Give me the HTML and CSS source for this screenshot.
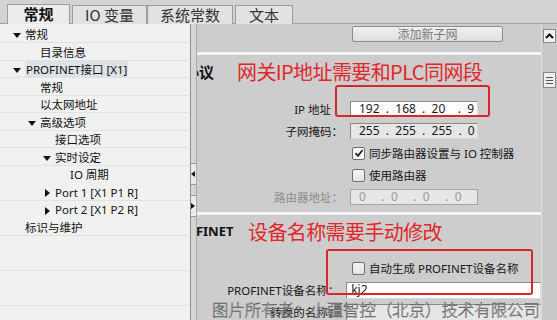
FILE: index.html
```html
<!DOCTYPE html>
<html lang="zh-CN">
<head>
    <meta charset="UTF-8">
    <title>PROFINET 接口属性</title>
    <link rel="stylesheet" href="styles.css">
</head>
<body>
    <div class="window">
        <div class="tabs">
            <div class="tab active">常规</div>
            <div class="tab t-io">IO 变量</div>
            <div class="tab t-const">系统常数</div>
            <div class="tab t-text">文本</div>
            <div class="tab-rest"></div>
        </div>

        <div class="main">
            <!-- 导航树 -->
            <ul class="tree">
                <li class="node l0"><span class="caret down"></span>常规</li>
                <li class="node l1">目录信息</li>
                <li class="node l0"><span class="caret down"></span><span class="sel">PROFINET接口 [X1]</span></li>
                <li class="node l1">常规</li>
                <li class="node l1">以太网地址</li>
                <li class="node l1"><span class="caret down"></span>高级选项</li>
                <li class="node l2">接口选项</li>
                <li class="node l2"><span class="caret down"></span>实时设定</li>
                <li class="node l3">IO 周期</li>
                <li class="node l2"><span class="caret right"></span>Port 1 [X1 P1 R]</li>
                <li class="node l2"><span class="caret right"></span>Port 2 [X1 P2 R]</li>
                <li class="node l0">标识与维护</li>
            </ul>

            <div class="splitter">
                <span class="split-btn"><span class="caret left"></span></span>
                <span class="split-btn"><span class="caret right"></span></span>
            </div>

            <!-- 属性区 -->
            <div class="content">
                <div class="toolbar">
                    <span class="btn">添加新子网</span>
                </div>

                <section class="section">
                    <div class="section-head">
                        <span class="section-title title-proto">协议</span>
                        <span class="note">网关IP地址需要和PLC同网段</span>
                    </div>
                    <div class="form form-ip">
                        <div class="row">
                            <span class="lbl lbl-nocolon">IP 地址</span>
                            <span class="field">192&nbsp; .&nbsp; 168&nbsp; .&nbsp; 20&nbsp;&nbsp;&nbsp; .&nbsp; 9</span>
                        </div>
                        <div class="row">
                            <span class="lbl">子网掩码：</span>
                            <span class="field grey">255&nbsp; .&nbsp; 255&nbsp; .&nbsp; 255&nbsp; .&nbsp; 0</span>
                        </div>
                        <div class="row check-row">
                            <span class="check on">
                                <svg width="10" height="10" viewBox="0 0 10 10"><path d="M1.5 5.2 L4 7.8 L8.6 2" fill="none" stroke="#222" stroke-width="1.8"/></svg>
                            </span>
                            同步路由器设置与 IO 控制器
                        </div>
                        <div class="row check-row">
                            <span class="check"></span>
                            使用路由器
                        </div>
                        <div class="row">
                            <span class="lbl disabled">路由器地址：</span>
                            <span class="field grey disabled">0&nbsp;&nbsp;&nbsp;&nbsp; .&nbsp; 0&nbsp;&nbsp;&nbsp;&nbsp; .&nbsp; 0&nbsp;&nbsp;&nbsp;&nbsp; .&nbsp; 0</span>
                        </div>
                    </div>
                </section>

                <section class="section">
                    <div class="section-head">
                        <span class="section-title title-pn">PROFINET</span>
                        <span class="note">设备名称需要手动修改</span>
                    </div>
                    <div class="form form-name">
                        <div class="row check-row">
                            <span class="check"></span>
                            自动生成 PROFINET设备名称
                        </div>
                        <div class="row">
                            <span class="lbl">PROFINET设备名称：</span>
                            <span class="field wide">kj2</span>
                        </div>
                        <div class="row">
                            <span class="lbl">转换的名称：</span>
                            <span class="field wide grey"></span>
                        </div>
                    </div>
                </section>
            </div>

            <div class="vscroll">
                <span class="sb-up">
                    <svg width="9" height="6" viewBox="0 0 9 6"><path d="M1 5 L4.5 1.5 L8 5" fill="none" stroke="#111" stroke-width="2"/></svg>
                </span>
                <span class="sb-thumb"><i></i><i></i><i></i></span>
            </div>
        </div>

        <!-- 标注 -->
        <div class="mark mark-ip"></div>
        <div class="mark mark-name"></div>
        <div class="watermark">图片所有者：小疆智控（北京）技术有限公司</div>
    </div>
</body>
</html>
```

FILE: styles.css
```css
* {
    margin: 0;
    padding: 0;
    box-sizing: border-box;
}

body {
    font-family: "Noto Sans", "Noto Sans CJK SC", sans-serif;
    font-size: 11.5px;
    color: #161616;
    background: #cdcdcd;
}

.window {
    position: relative;
    width: 557px;
    height: 320px;
    overflow: hidden;
}

/* 选项卡 */
.tabs {
    display: flex;
    align-items: flex-end;
    height: 24px;
    padding-left: 7px;
    background: #d3d3d3;
    border-bottom: 1px solid #a3a3a3;
}

.tab {
    height: 19px;
    margin-bottom: -1px;
    border: 1px solid #9d9d9d;
    border-bottom: none;
    background: #e2e2e2;
    font-family: "Noto Sans CJK SC", sans-serif;
    font-size: 15px;
    line-height: 17px;
    text-align: center;
    color: #333;
}

.tab.active {
    width: 63px;
    height: 20px;
    background: #ececec;
    font-weight: bold;
    color: #111;
}

.t-io {
    width: 75px;
    margin-left: 2px;
}

.t-const {
    width: 86px;
}

.t-text {
    width: 58px;
    margin-left: 2px;
}

.tab-rest {
    flex: 1;
}

.main {
    display: flex;
    height: 296px;
}

/* 导航树 */
.tree {
    list-style: none;
    width: 190px;
    padding-top: 2px;
    background-color: #f1f1f1;
    background-image: repeating-linear-gradient(to bottom, transparent 0, transparent 16.5px, #e2e2e2 16.5px, #e2e2e2 17.5px);
    background-position: 0 2px;
}

.node {
    height: 17.5px;
    line-height: 17.5px;
    white-space: nowrap;
    font-size: 11.5px;
    color: #111;
}

.l0 { padding-left: 25px; }
.l1 { padding-left: 40px; }
.l2 { padding-left: 55px; }
.l3 { padding-left: 70px; }

.sel {
    background: #dde1e8;
    padding: 1px 1px;
}

.caret {
    display: inline-block;
    width: 12px;
    margin-left: -12px;
    vertical-align: middle;
    line-height: 0;
}

.caret::before {
    content: "";
    display: inline-block;
    border-style: solid;
    border-color: transparent;
}

.caret.down::before {
    border-width: 5px 4px 0 4px;
    border-top-color: #111;
}

.caret.right::before {
    margin-left: 2px;
    border-width: 4px 0 4px 5px;
    border-left-color: #111;
}

.caret.left::before {
    border-width: 3px 4px 3px 0;
    border-right-color: #111;
}

/* 分隔条 */
.splitter {
    width: 7px;
    display: flex;
    flex-direction: column;
    padding-top: 139px;
    gap: 10px;
    background: #d5d5d5;
    border-left: 1px solid #8f8f8f;
    border-right: 1px solid #a9a9a9;
}

.split-btn {
    height: 22px;
    display: flex;
    align-items: center;
    background: #ebebeb;
    border-top: 1px solid #9a9a9a;
    border-bottom: 1px solid #9a9a9a;
}

.split-btn .caret {
    margin-left: 0;
    width: 5px;
}

.split-btn .caret.right::before {
    margin-left: 0;
    border-width: 3px 0 3px 4px;
}

/* 属性区 */
.content {
    flex: 1;
    overflow: hidden;
    background: #cdcdcd;
}

.toolbar {
    height: 28px;
    display: flex;
    justify-content: flex-end;
    align-items: flex-start;
    padding: 2px 38px 0 0;
}

.btn {
    width: 151px;
    height: 16px;
    border: 1px solid #8c8c8c;
    border-radius: 2px;
    background: linear-gradient(#f0f0f0, #dedede);
    font-family: "Noto Sans CJK SC", sans-serif;
    font-size: 12px;
    line-height: 14px;
    text-align: center;
    color: #7a7a7a;
}

.section {
    border-top: 3px solid #f4f4f4;
}

.section-head {
    display: flex;
    align-items: center;
    height: 32px;
    white-space: nowrap;
}

.section-title {
    flex: none;
    font-weight: bold;
    color: #111;
}

.title-proto {
    width: 53px;
    margin-left: -13px;
    font-family: "Noto Sans CJK SC", sans-serif;
    font-size: 15px;
}

.title-pn {
    width: 79px;
    margin-left: -28px;
    font-size: 13px;
}

.note {
    font-family: "Noto Sans CJK SC", sans-serif;
    font-size: 20px;
    letter-spacing: -0.6px;
    color: #e2262b;
}

.form-ip {
    padding: 11px 0 4px;
}

.form-name {
    padding-top: 10px;
}

.row {
    display: flex;
    align-items: center;
    height: 22px;
    white-space: nowrap;
}

.lbl {
    width: 146px;
    text-align: right;
}

.lbl-nocolon {
    padding-right: 12px;
}

.field {
    margin-left: 7px;
    width: 128px;
    height: 16px;
    padding-left: 8px;
    border: 1px solid #8a8a8a;
    border-right-color: #d8d8d8;
    border-bottom-color: #d8d8d8;
    background: #fff;
    line-height: 14px;
    font-size: 12px;
    color: #1a1a1a;
}

.field.grey {
    background: #e6e6e6;
}

.field.wide {
    width: 200px;
    height: 17px;
    padding-left: 4px;
}

.disabled {
    color: #8c8c8c;
}

.field.disabled {
    color: #9a9a9a;
    border-color: #a5a5a5;
}

.check-row {
    padding-left: 155px;
    gap: 4px;
}

.check {
    width: 13px;
    height: 13px;
    display: flex;
    align-items: center;
    justify-content: center;
    border: 1px solid #6e6e6e;
    border-radius: 2px;
    background: linear-gradient(#f4f4f4, #e4e4e4);
}

.check.on {
    background: #fff;
}

/* 滚动条 */
.vscroll {
    width: 16px;
    display: flex;
    flex-direction: column;
    align-items: center;
    padding-top: 5px;
    background: #c9c9c9;
    border-left: 1px solid #dcdcdc;
}

.sb-up {
    width: 13px;
    height: 14px;
    display: flex;
    align-items: center;
    justify-content: center;
    border: 1px solid #8a8a8a;
    background: #f2f2f2;
}

.sb-thumb {
    width: 13px;
    height: 16px;
    margin-top: 29px;
    display: flex;
    flex-direction: column;
    justify-content: center;
    gap: 2px;
    padding: 0 2px;
    border: 1px solid #8a8a8a;
    background: #efefef;
}

.sb-thumb i {
    height: 1px;
    background: #555;
}

/* 红色标注框 */
.mark {
    position: absolute;
    border: 2.5px solid #d8262a;
    border-radius: 3px;
}

.mark-ip {
    left: 335px;
    top: 85px;
    width: 155px;
    height: 32px;
}

.mark-name {
    left: 326px;
    top: 249px;
    width: 207px;
    height: 46px;
}

.watermark {
    position: absolute;
    left: 212px;
    top: 297px;
    font-family: "Noto Sans CJK SC", sans-serif;
    font-size: 16.4px;
    font-weight: 300;
    white-space: nowrap;
    color: #eeeeee;
    -webkit-text-stroke: 0.5px #555;
}
```
